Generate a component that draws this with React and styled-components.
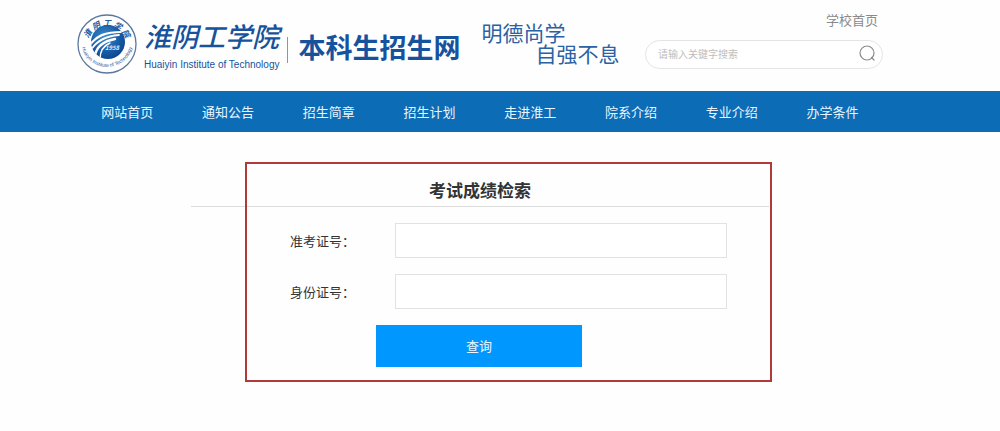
import React from "react";
import styled, { createGlobalStyle } from "styled-components";

const GlobalStyle = createGlobalStyle`
  *, *::before, *::after { box-sizing: border-box; }
  body {
    margin: 0;
    background: #fefefe;
    color: #333;
    font: 13px/20px "Noto Sans CJK SC", "Noto Sans", sans-serif;
  }
  a { color: inherit; text-decoration: none; }
  button, input { font: inherit; }
`;

const Band = styled.div`
  padding-right: 40px;
  background: ${(p) => (p.$blue ? "#0c6cb6" : "transparent")};
`;

const Container = styled.div`
  max-width: ${(p) => p.$width}px;
  margin: 0 auto;
`;

const HeaderRow = styled(Container).attrs({ as: "header" })`
  display: flex;
  align-items: flex-start;
  padding: 10px 0 17px;
`;

const Brand = styled.a`
  display: flex;
  align-items: center;
  padding-top: 4px;
  color: #17529c;
`;

const Emblem = styled.svg`
  width: 60px;
  height: 60px;
  flex: none;
`;

const School = styled.span`
  display: flex;
  flex-direction: column;
  margin-left: 7px;
  padding-top: 4px;
  white-space: nowrap;
`;

const SchoolName = styled.span`
  font-size: 27px;
  line-height: 34px;
  font-style: italic;
  font-weight: 500;
`;

const SchoolEnglish = styled.span`
  padding-top: 4px;
  font: 10px/16px "Liberation Sans", Arial, sans-serif;
`;

const SiteName = styled.strong`
  display: flex;
  align-items: center;
  gap: 10px;
  margin-left: 8px;
  padding-top: 6px;
  font-size: 27px;
  line-height: 26px;
  white-space: nowrap;
  &::before {
    content: "";
    height: 26px;
    margin-top: 6px;
    border-left: 1px solid #8d95a3;
  }
`;

const Motto = styled.p`
  display: flex;
  flex-direction: column;
  margin: 12px 0 0 21px;
  color: #2b62a4;
  font-size: 21px;
  line-height: 21px;
  white-space: nowrap;
`;

const MottoEnd = styled.span`
  padding-left: 54px;
`;

const Tools = styled.div`
  flex: 0 0 238px;
  display: flex;
  flex-direction: column;
  align-items: flex-end;
  gap: 10px;
  margin-left: auto;
`;

const HomeLink = styled.a`
  margin-right: 5px;
  color: #8a8a8a;
`;

const Search = styled.form`
  display: flex;
  align-items: center;
  width: 100%;
  height: 29px;
  padding: 0 6px 3px 12px;
  border: 1px solid #e4e4e4;
  border-radius: 15px;
  background: #fff;
`;

const SearchInput = styled.input`
  flex: 1;
  min-width: 0;
  padding: 2px 0 0;
  border: 0;
  outline: 0;
  background: none;
  color: #555;
  font-size: 10px;
  line-height: 16px;
  &::placeholder { color: #bdbdbd; opacity: 1; }
`;

const SearchButton = styled.button`
  display: flex;
  padding: 0;
  border: 0;
  background: none;
  color: #8a8a8a;
  cursor: pointer;
`;

const Menu = styled(Container).attrs({ as: "nav" })`
  display: grid;
  grid-template-columns: repeat(8, 1fr);
`;

const MenuLink = styled.a`
  color: #e9f6ff;
  line-height: 41px;
  text-align: center;
  white-space: nowrap;
`;

const Panel = styled(Container).attrs({ as: "main" })`
  position: relative;
  margin-top: 30px;
  padding: 15px 0;
`;

const Highlight = styled.div`
  position: absolute;
  inset: 0 -3px 0 54px;
  border: 2px solid #b03a3a;
  pointer-events: none;
`;

const Title = styled.h1`
  margin: 0;
  padding-bottom: 4px;
  border-bottom: 1px solid #dcdcdc;
  font-size: 17px;
  line-height: 25px;
  text-align: center;
`;

const QueryForm = styled.form`
  display: grid;
  gap: 16px;
  margin-top: 16px;
  padding: 0 42px 0 99px;
`;

const Field = styled.label`
  display: grid;
  grid-template-columns: 105px 1fr;
  align-items: center;
`;

const FieldInput = styled.input`
  width: 100%;
  height: 35px;
  padding: 0 8px;
  border: 1px solid #e2e2e2;
  border-radius: 0;
  background: #fff;
`;

const Submit = styled.button`
  width: 206px;
  height: 42px;
  margin-left: 86px;
  border: 0;
  background: #0097fe;
  color: #e9f6ff;
  cursor: pointer;
`;

const menu = ["网站首页", "通知公告", "招生简章", "招生计划", "走进淮工", "院系介绍", "专业介绍", "办学条件"];

const fields = [
  { id: "ticket", label: "准考证号：" },
  { id: "identity", label: "身份证号：" },
];

function SchoolEmblem() {
  return (
    <Emblem viewBox="0 0 60 60" aria-hidden="true">
      <defs>
        <radialGradient id="ball" cx="0.4" cy="0.35" r="0.75">
          <stop offset="0" stopColor="#3f8bc9" />
          <stop offset="0.6" stopColor="#155ba6" />
          <stop offset="1" stopColor="#0f3f86" />
        </radialGradient>
        <clipPath id="ballClip"><circle cx="31" cy="28" r="17" /></clipPath>
        <path id="ringTop" d="M10 32 A20 20 0 0 1 50 32" />
        <path id="ringBottom" d="M4 27 A26 26 0 0 0 56 27" />
      </defs>
      <circle cx="30" cy="30" r="29" fill="#fff" stroke="#5c789f" strokeWidth="1.3" />
      <circle cx="31" cy="28" r="17" fill="url(#ball)" />
      <g clipPath="url(#ballClip)" fill="none" stroke="#fff" strokeLinecap="round">
        <path d="M13 31 C19 22 28 18 45 18" strokeWidth="2.2" />
        <path d="M14 36 C20 26 30 22 42 21" strokeWidth="1.8" />
        <path d="M18 41 C20 32 27 27 38 25" strokeWidth="2.4" />
        <path d="M23 45 C23 37 26 32 33 29" strokeWidth="1.4" />
      </g>
      <text x="35" y="36" textAnchor="middle" fontSize="6" fontWeight="700" fontStyle="italic" fill="#dcecff">1958</text>
      <g fill="#24589b">
        <text fontSize="8" fontStyle="italic" fontWeight="700">
          <textPath href="#ringTop" startOffset="50%" textAnchor="middle">淮 阴 工 学 院</textPath>
        </text>
        <text fontSize="5" fontFamily="Liberation Sans">
          <textPath href="#ringBottom" startOffset="50%" textAnchor="middle">Huaiyin Institute of Technology</textPath>
        </text>
      </g>
    </Emblem>
  );
}

function SearchIcon() {
  return (
    <svg width="18" height="18" viewBox="0 0 18 18" fill="none" stroke="currentColor" strokeWidth="1.2" strokeLinecap="round">
      <circle cx="9" cy="9" r="7" />
      <path d="M13.5 13.5 L16 16" />
    </svg>
  );
}

const stop = (event) => event.preventDefault();

export default function App() {
  return (
    <>
      <GlobalStyle />
      <Band>
        <HeaderRow $width={806}>
          <Brand href="#">
            <SchoolEmblem />
            <School>
              <SchoolName>淮阴工学院</SchoolName>
              <SchoolEnglish>Huaiyin Institute of Technology</SchoolEnglish>
            </School>
            <SiteName>本科生招生网</SiteName>
          </Brand>
          <Motto>
            <span>明德尚学</span>
            <MottoEnd>自强不息</MottoEnd>
          </Motto>
          <Tools>
            <HomeLink href="#">学校首页</HomeLink>
            <Search role="search" onSubmit={stop}>
              <SearchInput type="text" aria-label="搜索" placeholder="请输入关键字搜索" />
              <SearchButton aria-label="搜索"><SearchIcon /></SearchButton>
            </Search>
          </Tools>
        </HeaderRow>
      </Band>
      <Band $blue>
        <Menu $width={806}>
          {menu.map((item) => <MenuLink key={item} href="#">{item}</MenuLink>)}
        </Menu>
      </Band>
      <Band>
        <Panel $width={578}>
          <Title>考试成绩检索</Title>
          <QueryForm onSubmit={stop}>
            {fields.map(({ id, label }) => (
              <Field key={id} htmlFor={id}>
                {label}
                <FieldInput id={id} name={id} type="text" />
              </Field>
            ))}
            <Submit>查询</Submit>
          </QueryForm>
          <Highlight />
        </Panel>
      </Band>
    </>
  );
}
